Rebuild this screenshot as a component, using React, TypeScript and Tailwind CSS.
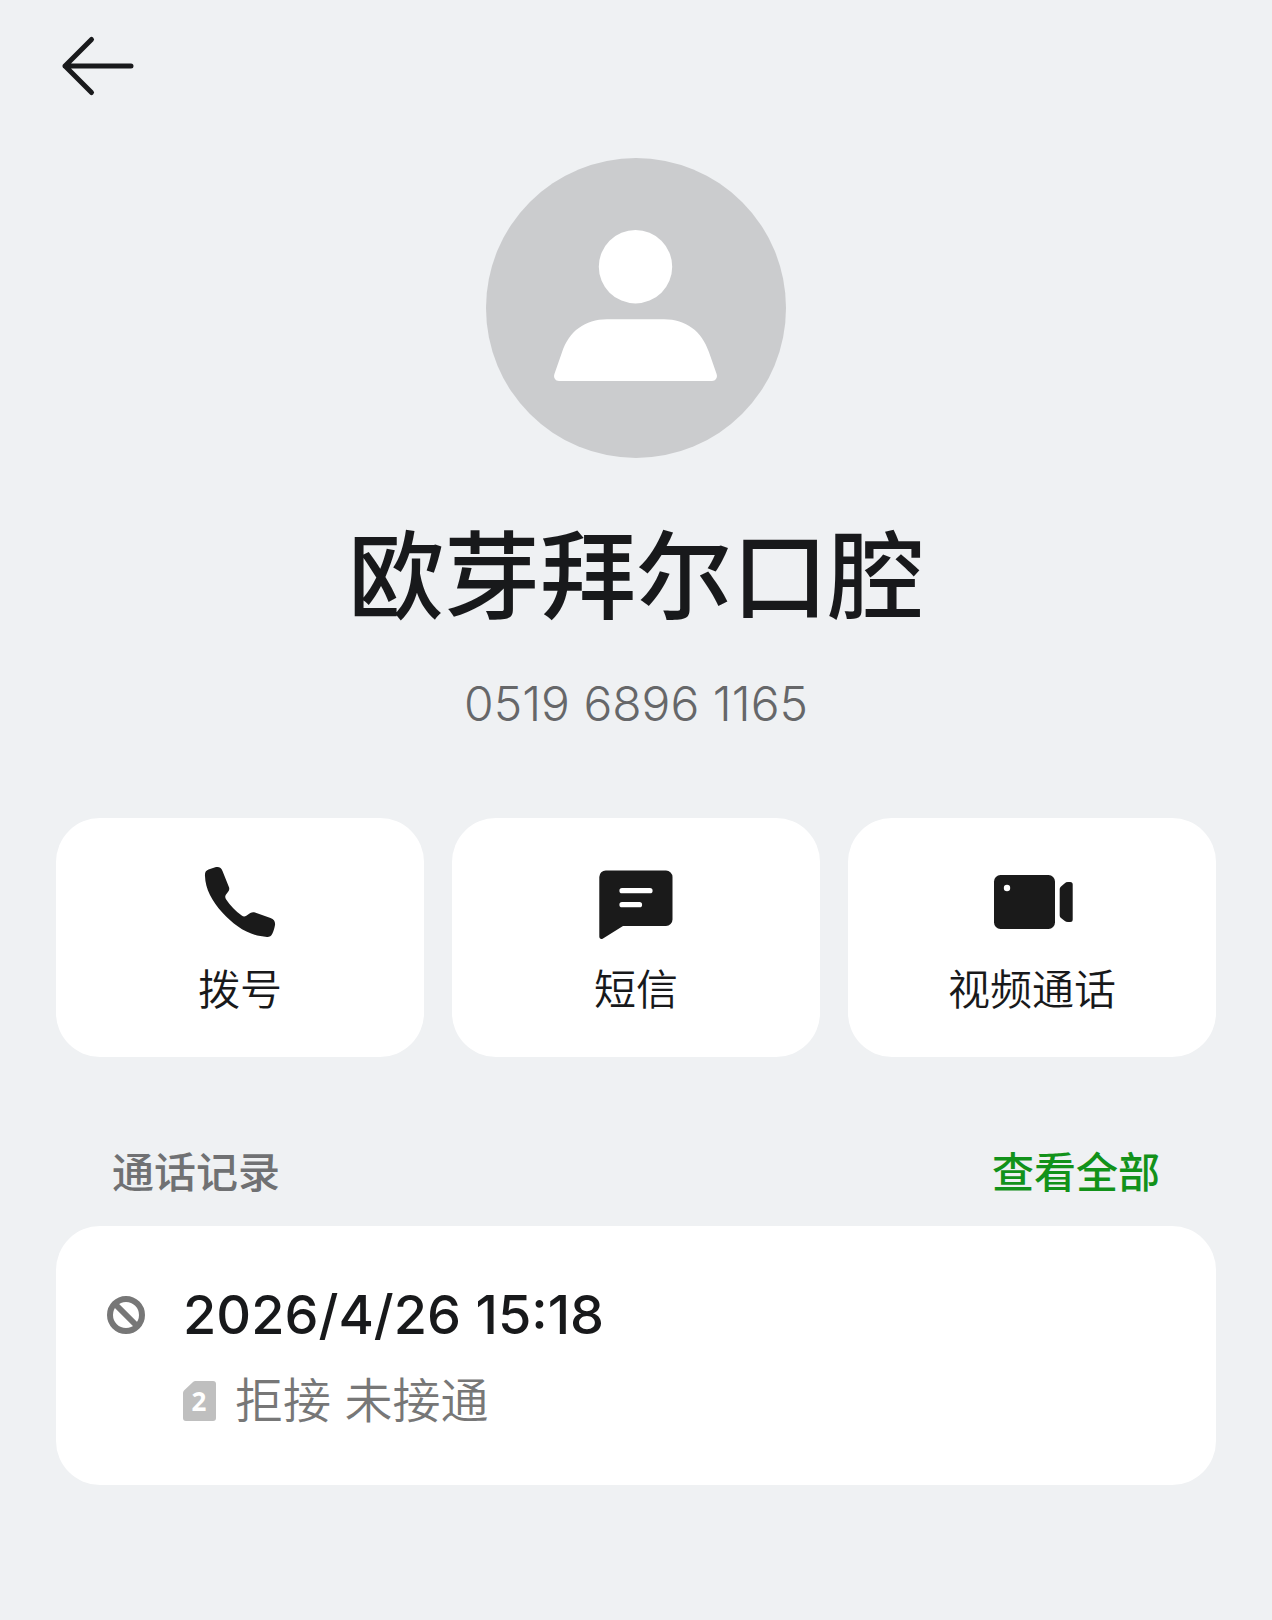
import type { ReactNode } from 'react';

type Action = { label: string; icon: ReactNode };

type CallRecord = { time: string; status: string; sim: number };

function BackIcon() {
  return (
    <svg width="80" height="68" viewBox="0 0 80 68" fill="none" stroke="#191a1c" strokeWidth="5" strokeLinecap="round" strokeLinejoin="round" aria-hidden="true">
      <path d="M35.5 7.500 9 34l26.500 26.500M9 34h66" />
    </svg>
  );
}

function Avatar() {
  return (
    <svg width="300" height="300" viewBox="0 0 300 300" aria-hidden="true">
      <circle cx="150" cy="150" r="150" fill="#cbccce" />
      <circle cx="149.500" cy="108.700" r="36.700" fill="#fff" />
      <path
        d="M121 161.300h57c22 0 38 12 45 33l7.500 21.500c1.500 4-1 7.200-4.500 7.200H73c-3.500 0-6-3.200-4.500-7.200L76 194.300C83 173.300 99 161.300 121 161.300Z"
        fill="#fff"
      />
    </svg>
  );
}

function PhoneIcon() {
  return (
    <svg width="84" height="80" viewBox="0 -1 84 80" fill="#1a1a1a" aria-hidden="true">
      <path d="M7 13C6.700 9.800 7.600 7.900 10.500 6.600L16.500 4.500C20.800 3.200 23.200 4.600 24.500 7.900L31.100 24.500C31.500 26 31.200 27.200 30.300 28.500L27.700 32C27 33.300 27.100 34.800 28 36.300C32 42.600 37.500 48.200 43.700 52.600C45.400 53.700 46.800 53.700 48.300 52.700L52.300 50C53.800 49.100 55.300 48.900 57 49.400L72.500 55.100C76 56.500 77.400 58.600 77 62C76.500 65.200 75.600 68 74.300 70.700C73.200 73 71.500 74 69 73.900C51.500 73.400 36 62.500 24.300 49.500C14 38 7.300 26 7 13Z" />
    </svg>
  );
}

function MessageIcon() {
  return (
    <svg width="84" height="80" viewBox="0 -1 84 80" aria-hidden="true">
      <path d="M12 7.500h60a6.500 6.500 0 0 1 6.500 6.500v42.500a6.500 6.500 0 0 1-6.500 6.500H29L9 75.500c-2 1.200-3.700.2-3.700-2V14A6.500 6.500 0 0 1 12 7.500Z" fill="#1a1a1a" />
      <path d="M28 27.700h28M28 41.700h17.500" stroke="#fff" strokeWidth="5.200" strokeLinecap="round" />
    </svg>
  );
}

function VideoIcon() {
  return (
    <svg width="84" height="80" viewBox="0 -1 84 80" fill="#1a1a1a" aria-hidden="true">
      <rect x="4" y="12" width="61" height="54" rx="6.500" />
      <circle cx="17" cy="25" r="3.200" fill="#fff" />
      <path d="M71 23.500 74.500 20.400Q76 19 78 19h2.200q2.500 0 2.500 2.500v35q0 2.500-2.500 2.500H78q-2 0-3.500-1.200L71 55q-1.300-1-1.300-2.500V26q0-1.500 1.300-2.500Z" />
    </svg>
  );
}

function BlockedIcon() {
  return (
    <svg width="38" height="38" viewBox="0 0 38 38" fill="none" stroke="#777" strokeWidth="6" aria-hidden="true">
      <circle cx="19" cy="19" r="16" />
      <path d="m8 8 22 22" />
    </svg>
  );
}

// Sim card outline with the slot number laid over it
function SimBadge({ slot }: { slot: number }) {
  return (
    <span className="relative flex h-10 w-8 items-center justify-center">
      <svg className="absolute inset-0" width="33" height="40" viewBox="0 0 33 40" fill="#bfbfbf" aria-hidden="true">
        <path d="M12.500 0H30a3 3 0 0 1 3 3v34a3 3 0 0 1-3 3H3a3 3 0 0 1-3-3V12q0-1.500 1-2.500L10 1q1-1 2.500-1Z" />
      </svg>
      <span className="relative font-['Noto_Sans'] text-[26px] leading-none font-bold text-white">{slot}</span>
    </span>
  );
}

const actions: Action[] = [
  { label: '拨号', icon: <PhoneIcon /> },
  { label: '短信', icon: <MessageIcon /> },
  { label: '视频通话', icon: <VideoIcon /> },
];

const records: CallRecord[] = [{ time: '2026/4/26 15:18', status: '拒接 未接通', sim: 2 }];

export default function App() {
  return (
    <div className="min-h-screen bg-[#eff1f3] px-14 pt-8 pb-32 font-[Inter,'Noto_Sans_CJK_SC',sans-serif] text-[#18191b]">
      <header className="flex">
        <button type="button" aria-label="返回">
          <BackIcon />
        </button>
      </header>

      <main>
        <section className="mt-[58px] flex flex-col items-center">
          <Avatar />
          <h1 className="mt-[54px] text-8xl leading-[128px] font-medium">欧芽拜尔口腔</h1>
          <p className="mt-8 text-5xl leading-[64px] font-light text-[#666769]">0519 6896 1165</p>
        </section>

        <section className="mt-[82px] grid grid-cols-3 gap-7">
          {actions.map((action) => (
            <button key={action.label} type="button" className="flex flex-col items-center rounded-[44px] bg-white pt-11 pb-[37px]">
              {action.icon}
              <span className="mt-[18px] text-[42px] leading-[60px] font-[350]">{action.label}</span>
            </button>
          ))}
        </section>

        <section>
          <div className="mt-[84px] flex items-center justify-between px-14 text-[42px] leading-[64px] font-medium">
            <h2 className="text-[#707173]">通话记录</h2>
            <a href="#records" className="text-[#12921a]">
              查看全部
            </a>
          </div>

          <ul id="records" className="mt-[21px] rounded-[44px] bg-white pt-[53px] pr-14 pb-[52px] pl-[51px]">
            {records.map((record) => (
              <li key={record.time} className="flex gap-[38px]">
                <div className="flex h-[72px] items-center">
                  <BlockedIcon />
                </div>
                <div>
                  <p className="text-[54px] leading-[72px] font-medium">{record.time}</p>
                  <div className="mt-[18px] flex items-center gap-5">
                    <SimBadge slot={record.sim} />
                    <span className="text-5xl leading-[64px] font-[350] text-[#777]">{record.status}</span>
                  </div>
                </div>
              </li>
            ))}
          </ul>
        </section>
      </main>
    </div>
  );
}
